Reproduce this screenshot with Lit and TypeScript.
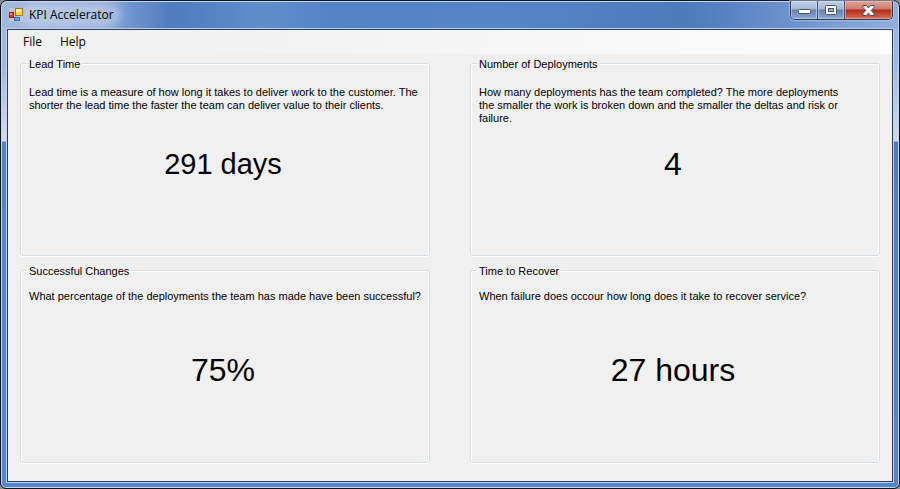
import { LitElement, html, css } from "lit";
import { customElement, property } from "lit/decorators.js";

@customElement("kpi-card")
class KpiCard extends LitElement {
  @property() heading = "";
  @property() description = "";
  @property() value = "";
  @property({ reflect: true }) size = "large";
  @property({ reflect: true }) spacing = "normal";
  @property({ reflect: true }) measure = "wide";

  static styles = css`
    :host { display: flex; min-width: 0; }
    .group {
      flex: 1;
      min-width: 0;
      box-sizing: border-box;
      margin: 0;
      padding: 0 4px 12px 8px;
      border: 1px solid #d5dfe5;
      border-radius: 3px;
      box-shadow: inset 1px 1px 0 #fff, inset -1px 0 0 #fff, 0 1px 0 #fff;
      font: 11px/13px "Liberation Sans", Arial, sans-serif;
      color: #000;
    }
    .legend {
      margin-left: -2px;
      padding: 2px 2px 0;
      background: #f0f0f0;
      line-height: 13px;
    }
    .description {
      margin: 0;
      padding-top: 15px;
      min-height: 51px;
    }
    :host([spacing="tight"]) .description { padding-top: 12px; min-height: 53px; }
    :host([measure="narrow"]) .description { max-width: 364px; }
    .value {
      display: block;
      margin-top: 8px;
      padding-right: 8px;
      text-align: center;
      font-size: 32px;
      line-height: 38px;
    }
    :host([size="medium"]) .value { font-size: 29px; }
  `;

  render() {
    return html`
      <fieldset class="group">
        <legend class="legend">${this.heading}</legend>
        <p class="description">${this.description}</p>
        <output class="value">${this.value}</output>
      </fieldset>
    `;
  }
}

@customElement("app-root")
class AppRoot extends LitElement {
  static styles = css`
    :host {
      display: block;
      background: #8a8a8a;
      font-family: "Open Sans", "Noto Sans", sans-serif;
      color: #000;
    }
    .window {
      display: flex;
      flex-direction: column;
      box-sizing: border-box;
      min-height: 100vh;
      padding: 0 5px 5px;
      border: 1px solid #10131c;
      border-radius: 7px 7px 6px 6px;
      box-shadow: inset 0 0 0 1px #c3d7f0;
      background:
        linear-gradient(90deg, #a3b9df 0, #93aeda 100px, #6f94cd 130px, #4f7bbf 170px, #628dcb 260px, #5283c7 340px, #5785c9 500px, #4e7aba 680px, #5c86c6 740px, #93b0de 100%) 0 0 / 100% 28px no-repeat,
        linear-gradient(#a0b7de 0, #9db5df 60px, #d3dff0 140px, #5583c8 141px, #5486cb 100%) 0 0 / 7px 100% no-repeat,
        linear-gradient(#9ab5e0 0, #9cb8e2 60px, #cfdcee 140px, #4f7cc0 141px, #5585cb 100%) 100% 0 / 7px 100% no-repeat,
        #5585ca;
    }
    .titlebar {
      display: flex;
      height: 28px;
      padding: 0 1px 0 3px;
    }
    .caption {
      display: flex;
      align-items: center;
      gap: 6px;
      flex: 1;
      margin: 0;
      font-size: 12px;
      font-weight: 400;
      line-height: 16px;
    }
    .glow {
      padding: 0 4px;
      margin: 0 -4px;
      border-radius: 8px;
      background: #ffffff40;
      box-shadow: 0 0 8px 4px #ffffff40;
    }
    .controls {
      display: flex;
      height: 18px;
      border: 1px solid #28374f;
      border-top: 0;
      border-radius: 0 0 5px 5px;
      box-shadow: 0 0 0 1px #c5d6ee88;
      overflow: hidden;
    }
    .control {
      display: flex;
      align-items: center;
      justify-content: center;
      box-sizing: border-box;
      width: 27px;
      padding: 0;
      border: 0;
      border-right: 1px solid #3d5378;
      background: linear-gradient(#c0cfe5 0, #a4b8d6 8px, #6782ad 9px, #8ba9d4 100%);
      box-shadow: inset 0 0 0 1px #d5e2f488;
    }
    .control.close {
      width: 47px;
      border-right: 0;
      background: linear-gradient(#e0a49a 0, #cd7a6c 8px, #b12a17 9px, #d4745a 100%);
      box-shadow: inset 0 0 0 1px #f3c5b888;
    }
    .client {
      flex: 1;
      display: flex;
      flex-direction: column;
      border: 1px solid #2c3c5c;
      box-shadow: 0 0 0 1px #b9d0ee;
      margin: 0 1px 1px;
      background: #f0f0f0;
    }
    .menubar {
      display: flex;
      height: 24px;
      padding-left: 6px;
      background: linear-gradient(90deg, #f0f0f0 0, #f0f0f0 10%, #fcfcfc 100%);
    }
    .menu {
      padding: 0 9px;
      border: 0;
      background: none;
      color: inherit;
      font: 12px/16px "Open Sans", "Noto Sans", sans-serif;
    }
    .cards {
      flex: 1;
      display: grid;
      grid-template-columns: 1fr 1fr;
      grid-template-rows: 1fr 1fr;
      column-gap: 40px;
      row-gap: 7px;
      padding: 2px 12px 18px;
    }
  `;

  render() {
    return html`
      <main class="window">
        <header class="titlebar">
          <h1 class="caption">
            <svg width="14" height="14" viewBox="0 0 14 14" aria-hidden="true">
              <rect x="0" y="0" width="14" height="14" fill="#c4c6cc" opacity=".8" />
              <rect x="6.500" y=".5" width="7" height="7" fill="#ffc933" stroke="#9a7416" />
              <rect x="7" y="1" width="5" height="3" fill="#ffec9c" />
              <rect x=".5" y="4.500" width="4" height="5" fill="#d83a2a" stroke="#9c1c12" />
              <rect x="1" y="5" width="2" height="2" fill="#f29a86" />
              <rect x="5.500" y="9.500" width="5" height="3" fill="#6ea3f0" stroke="#2f62bd" />
            </svg>
            <span class="glow">KPI Accelerator</span>
          </h1>
          <div class="controls">
            <button class="control" aria-label="Minimize">
              <svg width="13" height="12" viewBox="0 0 13 12"><rect x=".5" y="5.500" width="12" height="4" rx="1" fill="#fff" stroke="#4b5468" /></svg>
            </button>
            <button class="control" aria-label="Maximize">
              <svg width="12" height="10" viewBox="0 0 12 10"><rect x=".5" y=".5" width="11" height="9" rx="1" fill="#fff" stroke="#4b5468" /><rect x="3.500" y="3.500" width="5" height="3" fill="#8fa9cf" stroke="#4b5468" /></svg>
            </button>
            <button class="control close" aria-label="Close">
              <svg width="13" height="11" viewBox="0 0 13 11"><path d="M1 .5H4.500L6.500 3 8.500 .5H12V2.500L9.200 5.500 12 8.500V10.500H8.500L6.500 8 4.500 10.500H1V8.500L3.800 5.500 1 2.500Z" fill="#fff" stroke="#4b4a5c" stroke-linejoin="round" /></svg>
            </button>
          </div>
        </header>
        <div class="client">
          <nav class="menubar" aria-label="Main menu">
            <button class="menu">File</button>
            <button class="menu">Help</button>
          </nav>
          <div class="cards">
            <kpi-card heading="Lead Time" size="medium" value="291 days"
              description="Lead time is a measure of how long it takes to deliver work to the customer. The shorter the lead time the faster the team can deliver value to their clients."></kpi-card>
            <kpi-card heading="Number of Deployments" measure="narrow" value="4"
              description="How many deployments has the team completed? The more deployments the smaller the work is broken down and the smaller the deltas and risk or failure."></kpi-card>
            <kpi-card heading="Successful Changes" spacing="tight" value="75%"
              description="What percentage of the deployments the team has made have been successful?"></kpi-card>
            <kpi-card heading="Time to Recover" spacing="tight" value="27 hours"
              description="When failure does occour how long does it take to recover service?"></kpi-card>
          </div>
        </div>
      </main>
    `;
  }
}
